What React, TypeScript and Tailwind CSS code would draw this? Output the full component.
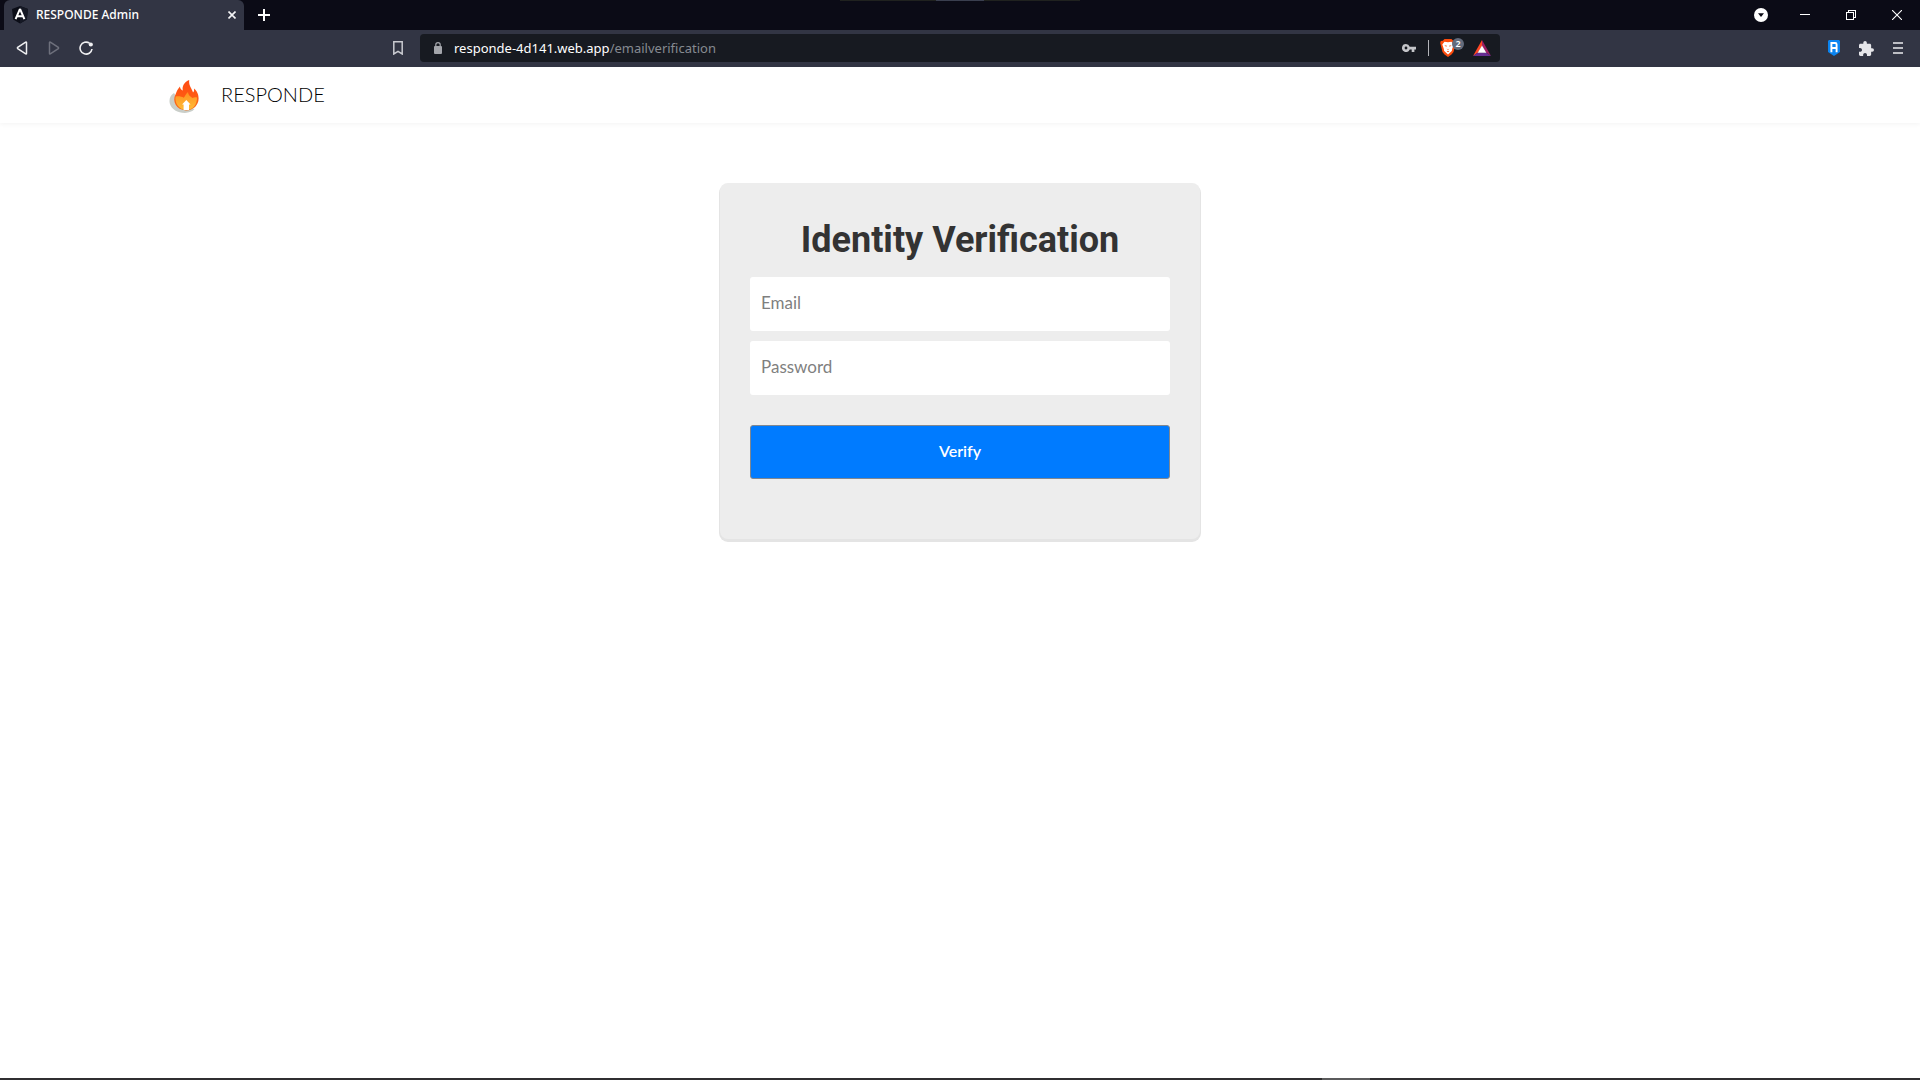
const ui = "font-['Noto_Sans',sans-serif]";

function AngularIcon() {
  return (
    <svg width="16" height="18" viewBox="0 0 16 18" className="block shrink-0">
      <path d="M8 0 16 3 14.8 13.5 8 17.5 1.200 13.5 0 3Z" fill="#0b0d17" />
      <path d="M8 0 16 3 14.800 13.500 8 17.500Z" fill="#151824" />
      <path d="M8 2.800 3.600 13.200M8 2.800 12.400 13.200M5.200 10.300H10.800" stroke="#fff" strokeWidth="2" fill="none" />
    </svg>
  );
}

function FlameLogo() {
  return (
    <svg width="32" height="36" viewBox="0 0 32 36" className="block shrink-0" aria-hidden="true">
      <defs>
        <linearGradient id="flame" x1="0" y1="0" x2="0" y2="1">
          <stop offset="0" stopColor="#ff4a14" />
          <stop offset="0.550" stopColor="#ff5a12" />
          <stop offset="1" stopColor="#f4731c" />
        </linearGradient>
        <linearGradient id="ember" x1="0" y1="0" x2="0" y2="1">
          <stop offset="0" stopColor="#ff9020" />
          <stop offset="1" stopColor="#ffbd38" />
        </linearGradient>
      </defs>
      <path d="M5 16C1.500 18 -.3 22 .8 26.500C2.300 32.500 9 36 16 35.900C20 35.800 23.500 34.500 25.500 32L12 27Z" fill="#c9cec9" />
      <path d="M20.200 3C15.500 5 12.800 9 13.800 13.500C12.300 13 11 11.500 11 9.500C8.500 12 7.800 14.500 6.500 17.500C3 24 7 33 17 33.400C24.500 33.400 29.600 28 29.600 21.500C29.600 16.500 27.500 13.500 25 11.500C25.300 13.500 25 14.800 24 15.500C23 11.500 19.500 9 20.200 3Z" fill="url(#flame)" />
      <path d="M19 15C16.800 17 16 19 14.800 20.800C12.500 19.500 10 19 6.500 19.500C5.500 26 10 32.800 17 32.900C24 32.900 28 28 28 20.500C26 20 24.800 20.500 23.500 21C21 19.500 19 17.500 19 15Z" fill="url(#ember)" />
      <path d="M17.300 23 21.500 27.500H20V33H14.600V27.500H13.100Z" fill="#fff" />
    </svg>
  );
}

function BraveIcon() {
  return (
    <svg width="16" height="18" viewBox="0 0 16 18" className="block">
      <path d="M4.500 0H11.500L13.200 1.700 15.200 1.900 15.800 4 15.400 5.500 13.500 13 11.500 15.500 8 18 4.500 15.500 2.500 13 .6 5.500 .2 4 .8 1.900 2.800 1.700Z" fill="#fb4b0c" />
      <path d="M4.500 2.800 8 3.300 11.500 2.800 13.700 5.500 12.300 9.500 11.800 12 8 15.500 4.200 12 3.700 9.500 2.300 5.500Z" fill="#fff" />
      <path d="M4.300 6.200 7 6.700 6.200 7.800ZM11.700 6.200 9 6.700 9.800 7.800ZM6.700 12H9.300L8 13.200ZM6.600 9.500 8 10.400 9.400 9.500 8 11.200Z" fill="#fb4b0c" />
    </svg>
  );
}

function TabStrip() {
  return (
    <div className="relative flex h-[30px] items-stretch bg-[#0b0b16] pl-1">
      <div className="absolute left-1/2 top-0 flex h-px w-[240px] -translate-x-1/2 justify-center bg-[#20221f]">
        <span className="h-px w-12 bg-[#3a3f4f]" />
      </div>
      <div className="flex w-60 items-center rounded-t-md bg-[#323544] px-2">
        <AngularIcon />
        <span className="ml-2 flex-1 text-[12px] font-medium leading-4 text-white">RESPONDE Admin</span>
        <button aria-label="Close tab" className="block">
          <svg width="8" height="8" viewBox="0 0 8 8" className="block">
            <path d="M.5 .5 7.500 7.500M7.500 .5 .5 7.500" stroke="#f4f4f6" strokeWidth="1.600" />
          </svg>
        </button>
      </div>
      <button aria-label="New tab" className="flex w-10 items-center justify-center">
        <svg width="12" height="12" viewBox="0 0 12 12">
          <path d="M6 0V12M0 6H12" stroke="#fff" strokeWidth="2" />
        </svg>
      </button>
      <div className="ml-auto flex items-center">
        <button aria-label="Search tabs" className="flex w-[42px] justify-center">
          <svg width="14" height="14" viewBox="0 0 14 14">
            <circle cx="7" cy="7" r="7" fill="#fff" />
            <path d="M4 5.200H10L7 9Z" fill="#0b0b16" />
          </svg>
        </button>
        <button aria-label="Minimize" className="flex w-[46px] justify-center">
          <svg width="10" height="10" viewBox="0 0 10 10" shapeRendering="crispEdges">
            <path d="M0 4.500H10" stroke="#fff" />
          </svg>
        </button>
        <button aria-label="Restore" className="flex w-[46px] justify-center">
          <svg width="10" height="10" viewBox="0 0 10 10" shapeRendering="crispEdges">
            <path d="M.5 2.500H7.500V9.500H.5ZM2.500 2V.5H9.500V7.500H8" stroke="#fff" fill="none" />
          </svg>
        </button>
        <button aria-label="Close window" className="flex w-[46px] justify-center">
          <svg width="10" height="10" viewBox="0 0 10 10">
            <path d="M0 0 10 10M10 0 0 10" stroke="#fff" strokeWidth="1.100" />
          </svg>
        </button>
      </div>
    </div>
  );
}

function Toolbar() {
  return (
    <div className="grid h-[37px] grid-cols-[7fr_18fr_7fr] items-center bg-[#323544] pb-px">
      <div className="flex items-center px-4">
        <button aria-label="Back">
          <svg width="12" height="14" viewBox="0 0 12 14" className="block">
            <path d="M9.700 1.100 1.700 6.400Q1.100 7 1.700 7.600L9.700 12.900Q10.500 13.200 10.500 12.400V1.600Q10.500 .8 9.700 1.100Z" fill="none" stroke="#efeff1" strokeWidth="1.500" />
          </svg>
        </button>
        <button aria-label="Forward" className="ml-5">
          <svg width="12" height="14" viewBox="0 0 12 14" className="block">
            <path d="M2.300 1.100 10.300 6.400Q10.900 7 10.300 7.600L2.300 12.900Q1.500 13.200 1.500 12.400V1.600Q1.500 .8 2.300 1.100Z" fill="none" stroke="#6e707c" strokeWidth="1.500" />
          </svg>
        </button>
        <button aria-label="Reload" className="ml-[19px]">
          <svg width="14" height="14" viewBox="0 0 14 14" className="block">
            <path d="M10.500 2.200A6 6 0 1 0 13 8" fill="none" stroke="#f0f0f2" strokeWidth="1.600" />
            <circle cx="11.800" cy="3.500" r="2.100" fill="#f0f0f2" />
          </svg>
        </button>
        <button aria-label="Bookmark this page" className="ml-auto">
          <svg width="12" height="14" viewBox="0 0 12 14" className="block">
            <path d="M1.800 .8H10.200V13L6 10.300 1.800 13Z" fill="none" stroke="#c9cad0" strokeWidth="1.500" />
          </svg>
        </button>
      </div>
      <div className="flex h-7 items-center rounded bg-[#171a21] pl-[14px] pr-[9px]">
        <svg width="8" height="12" viewBox="0 0 8 12" className="mb-px shrink-0">
          <path d="M1.800 5V2.800A2.200 2.200 0 0 1 6.200 2.800V5" fill="none" stroke="#a3a5ab" strokeWidth="1.200" />
          <rect y="4" width="8" height="8" rx="1" fill="#a3a5ab" />
        </svg>
        <span className="ml-3 flex-1 text-[13px] leading-5 text-[#868a91]">
          <span className="text-white">responde-4d141.web.app</span>/emailverification
        </span>
        <button aria-label="Saved passwords">
          <svg width="14" height="8" viewBox="0 0 14 8" className="block">
            <path fillRule="evenodd" d="M4 0A4 4 0 1 0 7.700 5.400H9.700V8H12.400V5.400H14V2.700H7.700A4 4 0 0 0 4 0ZM4 2.600A1.400 1.400 0 1 1 4 5.400A1.400 1.400 0 1 1 4 2.600Z" fill="#c4c5c9" />
          </svg>
        </button>
        <span className="ml-3 h-4 w-px bg-[#b3b4b9]" />
        <button aria-label="Brave Shields, 2 blocked" className="relative ml-[11px] w-6">
          <BraveIcon />
          <span className="absolute -top-px left-3 flex size-3 items-center justify-center rounded-full bg-[#636b7c] text-[9px] font-semibold leading-3 text-white">2</span>
        </button>
        <button aria-label="Brave Rewards" className="ml-[9px]">
          <svg width="18" height="16" viewBox="0 0 18 16" className="block">
            <path d="M9 0V6L5 12.500 0 16Z" fill="#ff4724" />
            <path d="M9 0 18 16 13 12.500 9 6Z" fill="#9e1f63" />
            <path d="M0 16 5 12.500H13L18 16Z" fill="#662d91" />
            <path d="M9 5.500 13.300 12.800H4.700Z" fill="#fff" />
          </svg>
        </button>
      </div>
      <div className="flex items-center justify-end pr-[17px]">
        <button aria-label="Bitwarden">
          <svg width="12" height="16" viewBox="0 0 12 16" className="block">
            <path d="M1 0H11L12 1V12L6 16 0 12V1Z" fill="#0a84f0" />
            <path d="M3.400 12.300V3H7.200Q8.600 3 8.600 4.500V12.300M3.400 8H8.600" fill="none" stroke="#fff" strokeWidth="1.900" />
          </svg>
        </button>
        <button aria-label="Extensions" className="ml-[19px]">
          <svg width="15" height="15" viewBox="2 1 21 21" className="block">
            <path d="M20.500 11H19V7c0-1.100-.9-2-2-2h-4V3.500a2.500 2.500 0 0 0-5 0V5H4c-1.100 0-1.990.9-1.990 2v3.800H3.500c1.490 0 2.700 1.210 2.700 2.700s-1.210 2.700-2.700 2.700H2V20c0 1.100.9 2 2 2h3.800v-1.500c0-1.490 1.210-2.700 2.700-2.700 1.490 0 2.700 1.210 2.700 2.700V22H17c1.100 0 2-.9 2-2v-4h1.500a2.500 2.500 0 0 0 0-5z" fill="#e6e6ea" />
          </svg>
        </button>
        <button aria-label="Menu" className="ml-[19px] flex w-[10px] flex-col gap-[3px]">
          <span className="h-[2px] bg-[#bdbec4]" />
          <span className="h-[2px] bg-[#bdbec4]" />
          <span className="h-[2px] bg-[#bdbec4]" />
        </button>
      </div>
    </div>
  );
}

export default function App() {
  const field =
    "block h-[54px] w-full rounded-[3px] bg-white px-[11px] pb-1 text-[17px] text-[#333] outline-none placeholder:text-[#7f7f7f]";
  return (
    <div className="flex min-h-screen flex-col bg-white font-['Lato',sans-serif]">
      <div className={ui}>
        <TabStrip />
        <Toolbar />
      </div>
      <header className="flex h-14 items-center pl-[169px] shadow-[0_1px_5px_rgba(0,0,0,0.050)]">
        <a href="#" className="flex items-center gap-5 text-[20px] font-light leading-7 text-black">
          <FlameLogo />
          <span className="pb-0.5">RESPONDE</span>
        </a>
      </header>
      <main className="flex flex-1 flex-col items-center px-4 pt-[60px]">
        <form
          onSubmit={(e) => e.preventDefault()}
          className="w-full max-w-[480px] rounded-[8px] bg-[#ededed] px-[30px] pb-[60px] pt-[30px] shadow-[0_2px_0_1px_#e4e4e4]"
        >
          <h1 className="text-center font-['Roboto',sans-serif] text-[36px] font-bold leading-[54px] text-[#333]">
            Identity Verification
          </h1>
          <div className="mt-[10px] flex flex-col gap-[10px]">
            <input type="email" aria-label="Email" placeholder="Email" className={field} />
            <input type="password" aria-label="Password" placeholder="Password" className={field} />
          </div>
          <button
            type="submit"
            className="mt-[30px] block h-[54px] w-full rounded-[3px] border border-[#808790] bg-[#007bff] pb-0.5 text-[16px] font-semibold text-white"
          >
            Verify
          </button>
        </form>
      </main>
      <footer className="flex h-[2px] bg-[#302f31]">
        <span className="ml-[68.850%] w-12 bg-[#5b5b5c]" />
      </footer>
    </div>
  );
}
